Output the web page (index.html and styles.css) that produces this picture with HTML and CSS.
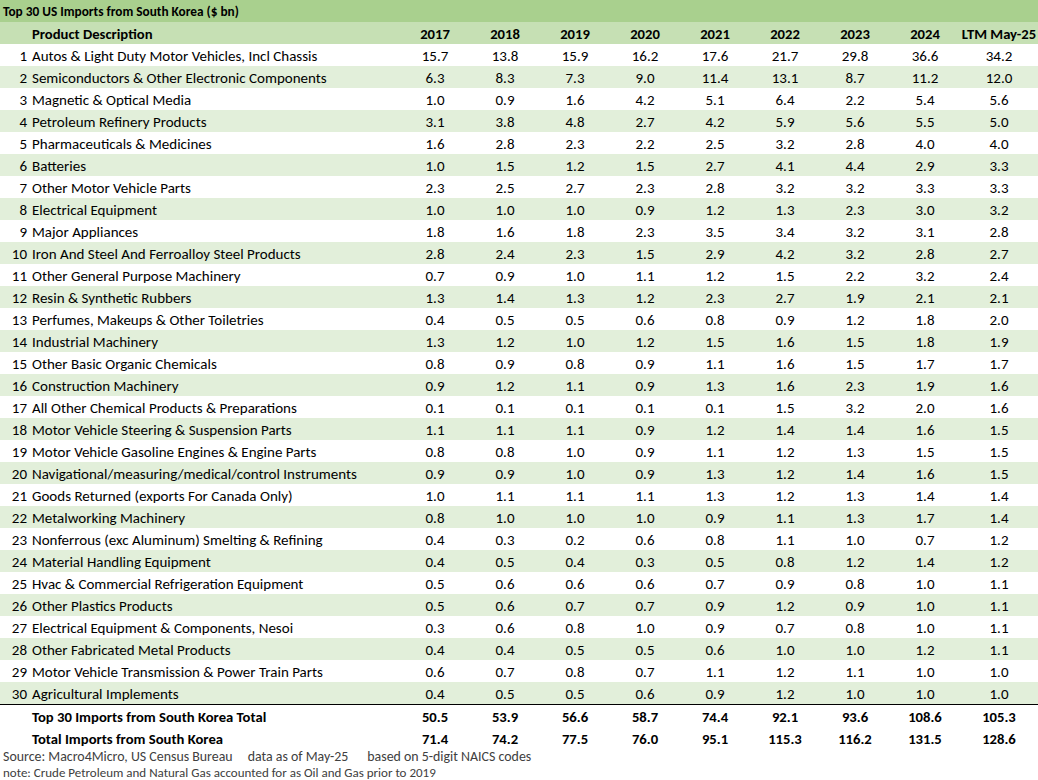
FILE: index.html
```html
<!DOCTYPE html>
<html>
<head>
<meta charset="utf-8">
<link rel="stylesheet" href="styles.css">
</head>
<body>
<div class="sheet">
  <div class="title">Top 30 US Imports from South Korea ($ bn)</div>
  <table class="grid">
    <colgroup>
      <col class="c-num"><col class="c-desc">
      <col class="c-yr"><col class="c-yr"><col class="c-yr"><col class="c-yr">
      <col class="c-yr"><col class="c-yr"><col class="c-yr"><col class="c-yr">
      <col class="c-ltm">
    </colgroup>
    <thead>
      <tr class="head">
        <th></th><th class="desc">Product Description</th>
        <th>2017</th><th>2018</th><th>2019</th><th>2020</th><th>2021</th><th>2022</th><th>2023</th><th>2024</th><th>LTM May-25</th>
      </tr>
    </thead>
    <tbody>
      <tr><td class="num">1</td><td class="desc">Autos &amp; Light Duty Motor Vehicles, Incl Chassis</td><td>15.7</td><td>13.8</td><td>15.9</td><td>16.2</td><td>17.6</td><td>21.7</td><td>29.8</td><td>36.6</td><td>34.2</td></tr>
      <tr><td class="num">2</td><td class="desc">Semiconductors &amp; Other Electronic Components</td><td>6.3</td><td>8.3</td><td>7.3</td><td>9.0</td><td>11.4</td><td>13.1</td><td>8.7</td><td>11.2</td><td>12.0</td></tr>
      <tr><td class="num">3</td><td class="desc">Magnetic &amp; Optical Media</td><td>1.0</td><td>0.9</td><td>1.6</td><td>4.2</td><td>5.1</td><td>6.4</td><td>2.2</td><td>5.4</td><td>5.6</td></tr>
      <tr><td class="num">4</td><td class="desc">Petroleum Refinery Products</td><td>3.1</td><td>3.8</td><td>4.8</td><td>2.7</td><td>4.2</td><td>5.9</td><td>5.6</td><td>5.5</td><td>5.0</td></tr>
      <tr><td class="num">5</td><td class="desc">Pharmaceuticals &amp; Medicines</td><td>1.6</td><td>2.8</td><td>2.3</td><td>2.2</td><td>2.5</td><td>3.2</td><td>2.8</td><td>4.0</td><td>4.0</td></tr>
      <tr><td class="num">6</td><td class="desc">Batteries</td><td>1.0</td><td>1.5</td><td>1.2</td><td>1.5</td><td>2.7</td><td>4.1</td><td>4.4</td><td>2.9</td><td>3.3</td></tr>
      <tr><td class="num">7</td><td class="desc">Other Motor Vehicle Parts</td><td>2.3</td><td>2.5</td><td>2.7</td><td>2.3</td><td>2.8</td><td>3.2</td><td>3.2</td><td>3.3</td><td>3.3</td></tr>
      <tr><td class="num">8</td><td class="desc">Electrical Equipment</td><td>1.0</td><td>1.0</td><td>1.0</td><td>0.9</td><td>1.2</td><td>1.3</td><td>2.3</td><td>3.0</td><td>3.2</td></tr>
      <tr><td class="num">9</td><td class="desc">Major Appliances</td><td>1.8</td><td>1.6</td><td>1.8</td><td>2.3</td><td>3.5</td><td>3.4</td><td>3.2</td><td>3.1</td><td>2.8</td></tr>
      <tr><td class="num">10</td><td class="desc">Iron And Steel And Ferroalloy Steel Products</td><td>2.8</td><td>2.4</td><td>2.3</td><td>1.5</td><td>2.9</td><td>4.2</td><td>3.2</td><td>2.8</td><td>2.7</td></tr>
      <tr><td class="num">11</td><td class="desc">Other General Purpose Machinery</td><td>0.7</td><td>0.9</td><td>1.0</td><td>1.1</td><td>1.2</td><td>1.5</td><td>2.2</td><td>3.2</td><td>2.4</td></tr>
      <tr><td class="num">12</td><td class="desc">Resin &amp; Synthetic Rubbers</td><td>1.3</td><td>1.4</td><td>1.3</td><td>1.2</td><td>2.3</td><td>2.7</td><td>1.9</td><td>2.1</td><td>2.1</td></tr>
      <tr><td class="num">13</td><td class="desc">Perfumes, Makeups &amp; Other Toiletries</td><td>0.4</td><td>0.5</td><td>0.5</td><td>0.6</td><td>0.8</td><td>0.9</td><td>1.2</td><td>1.8</td><td>2.0</td></tr>
      <tr><td class="num">14</td><td class="desc">Industrial Machinery</td><td>1.3</td><td>1.2</td><td>1.0</td><td>1.2</td><td>1.5</td><td>1.6</td><td>1.5</td><td>1.8</td><td>1.9</td></tr>
      <tr><td class="num">15</td><td class="desc">Other Basic Organic Chemicals</td><td>0.8</td><td>0.9</td><td>0.8</td><td>0.9</td><td>1.1</td><td>1.6</td><td>1.5</td><td>1.7</td><td>1.7</td></tr>
      <tr><td class="num">16</td><td class="desc">Construction Machinery</td><td>0.9</td><td>1.2</td><td>1.1</td><td>0.9</td><td>1.3</td><td>1.6</td><td>2.3</td><td>1.9</td><td>1.6</td></tr>
      <tr><td class="num">17</td><td class="desc">All Other Chemical Products &amp; Preparations</td><td>0.1</td><td>0.1</td><td>0.1</td><td>0.1</td><td>0.1</td><td>1.5</td><td>3.2</td><td>2.0</td><td>1.6</td></tr>
      <tr><td class="num">18</td><td class="desc">Motor Vehicle Steering &amp; Suspension Parts</td><td>1.1</td><td>1.1</td><td>1.1</td><td>0.9</td><td>1.2</td><td>1.4</td><td>1.4</td><td>1.6</td><td>1.5</td></tr>
      <tr><td class="num">19</td><td class="desc">Motor Vehicle Gasoline Engines &amp; Engine Parts</td><td>0.8</td><td>0.8</td><td>1.0</td><td>0.9</td><td>1.1</td><td>1.2</td><td>1.3</td><td>1.5</td><td>1.5</td></tr>
      <tr><td class="num">20</td><td class="desc">Navigational/measuring/medical/control Instruments</td><td>0.9</td><td>0.9</td><td>1.0</td><td>0.9</td><td>1.3</td><td>1.2</td><td>1.4</td><td>1.6</td><td>1.5</td></tr>
      <tr><td class="num">21</td><td class="desc">Goods Returned (exports For Canada Only)</td><td>1.0</td><td>1.1</td><td>1.1</td><td>1.1</td><td>1.3</td><td>1.2</td><td>1.3</td><td>1.4</td><td>1.4</td></tr>
      <tr><td class="num">22</td><td class="desc">Metalworking Machinery</td><td>0.8</td><td>1.0</td><td>1.0</td><td>1.0</td><td>0.9</td><td>1.1</td><td>1.3</td><td>1.7</td><td>1.4</td></tr>
      <tr><td class="num">23</td><td class="desc">Nonferrous (exc Aluminum) Smelting &amp; Refining</td><td>0.4</td><td>0.3</td><td>0.2</td><td>0.6</td><td>0.8</td><td>1.1</td><td>1.0</td><td>0.7</td><td>1.2</td></tr>
      <tr><td class="num">24</td><td class="desc">Material Handling Equipment</td><td>0.4</td><td>0.5</td><td>0.4</td><td>0.3</td><td>0.5</td><td>0.8</td><td>1.2</td><td>1.4</td><td>1.2</td></tr>
      <tr><td class="num">25</td><td class="desc">Hvac &amp; Commercial Refrigeration Equipment</td><td>0.5</td><td>0.6</td><td>0.6</td><td>0.6</td><td>0.7</td><td>0.9</td><td>0.8</td><td>1.0</td><td>1.1</td></tr>
      <tr><td class="num">26</td><td class="desc">Other Plastics Products</td><td>0.5</td><td>0.6</td><td>0.7</td><td>0.7</td><td>0.9</td><td>1.2</td><td>0.9</td><td>1.0</td><td>1.1</td></tr>
      <tr><td class="num">27</td><td class="desc">Electrical Equipment &amp; Components, Nesoi</td><td>0.3</td><td>0.6</td><td>0.8</td><td>1.0</td><td>0.9</td><td>0.7</td><td>0.8</td><td>1.0</td><td>1.1</td></tr>
      <tr><td class="num">28</td><td class="desc">Other Fabricated Metal Products</td><td>0.4</td><td>0.4</td><td>0.5</td><td>0.5</td><td>0.6</td><td>1.0</td><td>1.0</td><td>1.2</td><td>1.1</td></tr>
      <tr><td class="num">29</td><td class="desc">Motor Vehicle Transmission &amp; Power Train Parts</td><td>0.6</td><td>0.7</td><td>0.8</td><td>0.7</td><td>1.1</td><td>1.2</td><td>1.1</td><td>1.0</td><td>1.0</td></tr>
      <tr class="last"><td class="num">30</td><td class="desc">Agricultural Implements</td><td>0.4</td><td>0.5</td><td>0.5</td><td>0.6</td><td>0.9</td><td>1.2</td><td>1.0</td><td>1.0</td><td>1.0</td></tr>
    </tbody>
    <tfoot>
      <tr class="total"><td></td><td class="desc">Top 30 Imports from South Korea Total</td><td>50.5</td><td>53.9</td><td>56.6</td><td>58.7</td><td>74.4</td><td>92.1</td><td>93.6</td><td>108.6</td><td>105.3</td></tr>
      <tr class="total"><td></td><td class="desc">Total Imports from South Korea</td><td>71.4</td><td>74.2</td><td>77.5</td><td>76.0</td><td>95.1</td><td>115.3</td><td>116.2</td><td>131.5</td><td>128.6</td></tr>
    </tfoot>
  </table>
  <div class="notes">
    <div class="note-line"><span>Source: Macro4Micro, US Census Bureau</span><span class="gap-a">data as of May-25</span><span class="gap-b">based on 5-digit NAICS codes</span></div>
    <div class="note-line note-small">note: Crude Petroleum and Natural Gas accounted for as Oil and Gas prior to 2019</div>
  </div>
</div>
</body>
</html>
```
FILE: styles.css
```css
html, body {
  margin: 0;
  padding: 0;
  background: #ffffff;
}
.sheet {
  width: 1038px;
  font-family: Carlito, Calibri, Lato, "Liberation Sans", sans-serif;
  font-size: 14.67px;
  color: #000000;
}
.title {
  height: 22px;
  box-sizing: border-box;
  padding: 2px 0 0 3px;
  line-height: 20px;
  font-size: 13.3px;
  font-weight: bold;
  background: #a9d08e;
}
.grid {
  width: 1038px;
  table-layout: fixed;
  border-collapse: collapse;
  border-spacing: 0;
}
.c-num { width: 28px; }
.c-desc { width: 372px; }
.c-yr { width: 70px; }
.c-ltm { width: 78px; }
.grid th,
.grid td {
  height: 22px;
  box-sizing: border-box;
  padding: 2px 0 0;
  line-height: 20px;
  text-align: center;
  white-space: nowrap;
  vertical-align: top;
}
.grid th {
  font-weight: bold;
}
.grid tbody td {
  font-size: 15px;
}
.grid .num {
  text-align: right;
  padding-right: 1px;
}
.grid .desc {
  text-align: left;
  padding-left: 4px;
}
.head {
  background: #c6e0b4;
}
.grid tbody tr:nth-child(even) {
  background: #e2efda;
}
.grid tr.last td {
  border-bottom: 1px solid #000000;
}
.total td {
  font-weight: bold;
}
.notes {
  color: #404040;
  padding-left: 3px;
  font-size: 13.9px;
}
.note-line {
  display: flex;
  height: 16px;
  line-height: 16px;
}
.note-small {
  font-size: 13px;
}
.gap-a {
  margin-left: 15px;
}
.gap-b {
  margin-left: 19px;
}
```
